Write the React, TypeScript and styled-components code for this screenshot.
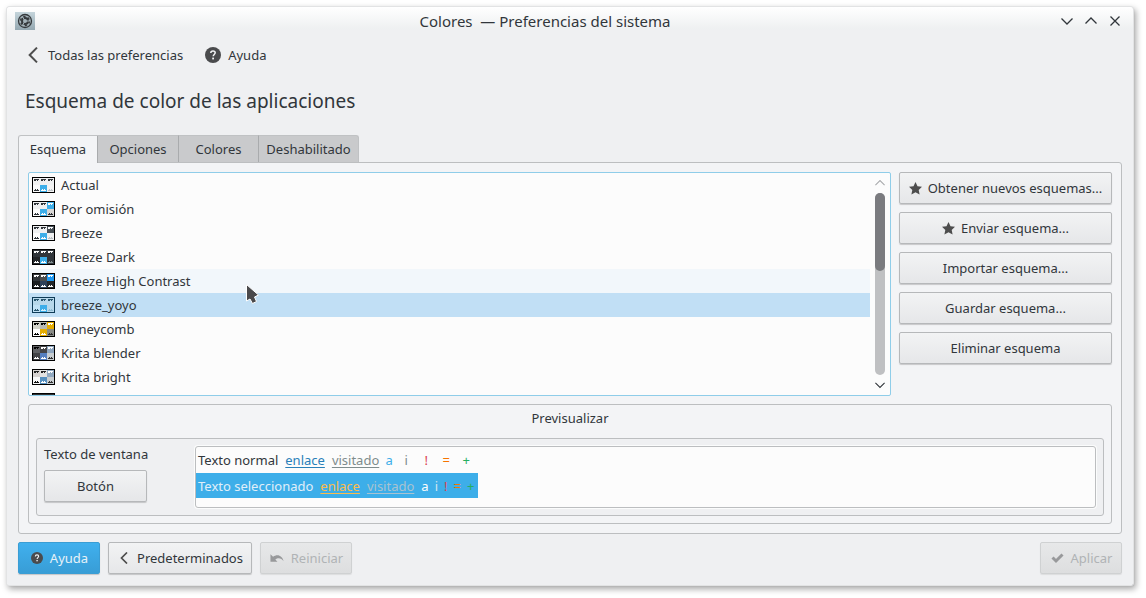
import React from "react";
import styled, { createGlobalStyle, css } from "styled-components";

const GlobalStyle = createGlobalStyle`
  * { box-sizing: border-box; }
  body {
    margin: 0;
    background: #ffffff;
    color: #31363b;
    font-family: "Noto Sans", "Open Sans", sans-serif;
    font-size: 13px;
    line-height: 18px;
  }
  button { font: inherit; color: inherit; margin: 0; padding: 0; border: 0; background: none; }
  svg { display: block; flex: none; }
`;

const Desktop = styled.div`
  padding: 7px 13px 13px 7px;
`;

const Window = styled.main`
  border-radius: 3px 3px 2px 2px;
  background: linear-gradient(#ffffff, #eef0f1 22px, #eff0f2 23px);
  box-shadow: 0 0 0 1px #e2e3e4, 1px 1px 1px #a0a2a4, 2px 3px 6px 1px rgba(0, 0, 0, 0.35);
`;

const TitleBar = styled.header`
  display: flex;
  align-items: center;
  height: 28px;
  margin-bottom: 1px;
  padding: 0 6px 0 8px;
`;

const Title = styled.h1`
  flex: 1;
  margin: 0;
  font-size: 15px;
  font-weight: 400;
  line-height: 20px;
  text-align: center;
  white-space: pre;
`;

const WindowButton = styled.button`
  display: grid;
  place-items: center;
  width: 24px;
  height: 24px;
`;

const ToolBar = styled.nav`
  display: flex;
  align-items: center;
  gap: 22px;
  height: 38px;
  padding: 0 18px;
`;

const ToolButton = styled.button`
  display: flex;
  align-items: center;
  gap: 7px;
`;

const Heading = styled.h2`
  margin: 0 0 7px;
  padding: 13px 18px;
  font-size: 19px;
  font-weight: 400;
  line-height: 28px;
`;

const Content = styled.div`
  padding: 0 11px 11px;
`;

const TabList = styled.div`
  display: flex;
`;

const Tab = styled.button<{ $active?: boolean; $width: number }>`
  width: ${(p) => p.$width}px;
  height: 27px;
  background: #c9cacc;
  border-top: 1px solid #c0c2c4;
  border-right: 1px solid #a9abad;
  &:last-child { border-radius: 0 3px 0 0; border-right-color: #c0c2c4; }
  ${(p) =>
    p.$active &&
    css`
      height: 28px;
      margin-bottom: -1px;
      padding-bottom: 1px;
      position: relative;
      background: #f3f4f6;
      border-left: 1px solid #bcbec0;
      border-radius: 3px 0 0 0;
    `}
`;

const frame = css`
  border: 1px solid #bcbec0;
  border-radius: 3px;
`;

const TabPanel = styled.section`
  ${frame}
  border-top-left-radius: 0;
  padding: 9px;
  background: #f3f4f6;
`;

const Columns = styled.div`
  display: flex;
  gap: 8px;
`;

const SchemeBox = styled.div`
  display: flex;
  flex: 1;
  height: 224px;
  overflow: hidden;
  border: 1px solid #8fcde9;
  border-radius: 2px;
  background: #fcfcfc;
`;

const SchemeList = styled.ul`
  flex: 1;
  margin: 0;
  padding: 0;
  list-style: none;
`;

const SchemeRow = styled.li<{ $state?: "hover" | "selected" }>`
  display: flex;
  align-items: center;
  gap: 6px;
  height: 24px;
  padding-left: 3px;
  background: ${(p) =>
    p.$state === "selected" ? "#c1dff5" : p.$state === "hover" ? "#f2f7fb" : "transparent"};
`;

const ScrollBar = styled.div`
  display: flex;
  flex-direction: column;
  align-items: center;
  width: 20px;
`;

const ScrollButton = styled.button`
  display: grid;
  place-items: center;
  width: 20px;
  height: 20px;
`;

const ScrollTrack = styled.div`
  flex: 1;
  width: 10px;
  border-radius: 5px;
  background: #bfc0c2;
`;

const ScrollThumb = styled.div`
  height: 78px;
  border-radius: 5px;
  background: #7a7b7f;
`;

const Actions = styled.div`
  display: flex;
  flex-direction: column;
  gap: 8px;
  width: 213px;
`;

const PushButton = styled.button<{ $primary?: boolean; $width?: number }>`
  display: flex;
  align-items: center;
  justify-content: center;
  gap: 6px;
  height: 32px;
  width: ${(p) => (p.$width ? `${p.$width}px` : "auto")};
  border: 1px solid #b6b8ba;
  border-radius: 2px;
  background: linear-gradient(#f2f3f4, #e6e7e9);
  box-shadow: 0 1px 1px rgba(0, 0, 0, 0.18);
  white-space: nowrap;
  &:disabled {
    color: #b0b3b5;
    border-color: #cfd1d2;
    background: linear-gradient(#e7e8e9, #dddedf);
    box-shadow: 0 1px 1px rgba(0, 0, 0, 0.08);
  }
  ${(p) =>
    p.$primary &&
    css`
      color: #e8f2f8;
      border-color: #3a9dd4;
      background: linear-gradient(#40b0ee, #389dd6);
    `}
`;

const Preview = styled.section`
  ${frame}
  margin-top: 8px;
  padding: 4px 7px 7px;
`;

const PreviewTitle = styled.h3`
  margin: 0 0 11px;
  font-size: 13px;
  font-weight: 400;
  line-height: 18px;
  text-align: center;
`;

const PreviewFrame = styled.div`
  ${frame}
  display: flex;
  gap: 48px;
  padding: 7px;
  background: #eff0f2;
`;

const Sample = styled.div`
  display: flex;
  flex-direction: column;
  gap: 8px;
  width: 103px;
  line-height: 16px;
  white-space: nowrap;
`;

const TextView = styled.div`
  ${frame}
  display: flex;
  flex-direction: column;
  gap: 1px;
  flex: 1;
  height: 62px;
  background: #fcfcfc;
  box-shadow: 0 0 0 1px #fbfcfc;
`;

const TextLine = styled.div<{ $selected?: boolean }>`
  display: flex;
  align-items: center;
  gap: 7px;
  width: max-content;
  height: 25px;
  padding: 0 4px 0 2px;
  color: ${(p) => (p.$selected ? "#e0eff9" : "#31363b")};
  background: ${(p) => (p.$selected ? "#3daee9" : "transparent")};
`;

const Link = styled.a<{ $color: string }>`
  color: ${(p) => p.$color};
  text-decoration: underline;
  text-underline-offset: 2px;
`;

const Marks = styled.span<{ $wide?: boolean }>`
  display: flex;
  gap: ${(p) => (p.$wide ? 0 : 6)}px;
  ${(p) =>
    p.$wide &&
    css`
      & > span { width: 20px; text-align: center; }
      & > span:first-child { width: 14px; margin-left: -4px; }
    `}
`;

const Mark = styled.span<{ $color: string }>`
  color: ${(p) => p.$color};
`;

const Footer = styled.footer`
  display: flex;
  gap: 8px;
  margin-top: 8px;
  & > button { gap: 7px; padding-left: 1px; }
`;

const Spacer = styled.span`
  flex: 1;
`;

const Pointer = styled.svg`
  position: absolute;
  left: 245px;
  top: 283px;
`;

type ChevronProps = { dir: "up" | "down" | "left"; size?: number; color?: string; weight?: number };

function Chevron({ dir, size = 12, color = "#31363b", weight = 1.3 }: ChevronProps) {
  const paths = { down: "M.5 3.5 6 9l5.500-5.500", up: "M.5 8.500 6 3l5.500 5.500", left: "M9 .5 3.500 6 9 11.500" };
  return (
    <svg width={size} height={size} viewBox="0 0 12 12" fill="none" stroke={color} strokeWidth={weight}>
      <path d={paths[dir]} />
    </svg>
  );
}

function HelpIcon({ size }: { size: number }) {
  return (
    <svg width={size} height={size} viewBox="0 0 16 16">
      <circle cx="8" cy="8" r="8" fill="#4a4b4d" />
      <path d="M5.800 5.900c0-1.400 1-2 2.200-2s2.200.7 2.200 1.900c0 1.600-2 1.700-2 3.400" fill="none" stroke="#f3f4f5" strokeWidth="1.500" />
      <rect x="7.200" y="10.600" width="1.800" height="1.800" fill="#f3f4f5" />
    </svg>
  );
}

function StarIcon() {
  return (
    <svg width="13" height="13" viewBox="0 0 13 13" fill="#4d4d4d">
      <path d="M6.500 0 8.500 4.200l4.500.6-3.300 3.100.9 4.700-4.100-2.300-4.100 2.300.9-4.700L0 4.800l4.500-.6z" />
    </svg>
  );
}

function AppIcon() {
  return (
    <svg width="20" height="18" viewBox="0 0 20 18">
      <defs>
        <linearGradient id="appTile" x1="0" y1="0" x2="0" y2="1">
          <stop offset="0" stopColor="#c5d5db" />
          <stop offset="1" stopColor="#94a8b1" />
        </linearGradient>
      </defs>
      <rect width="20" height="18" fill="url(#appTile)" />
      <circle cx="10" cy="9" r="6.500" fill="#a5b4ba" stroke="#35393c" strokeWidth="1.300" />
      <circle cx="10" cy="9" r="3" fill="none" stroke="#35393c" strokeWidth="2" />
      <circle cx="10" cy="9" r="4.500" fill="none" stroke="#35393c" strokeWidth="1.300" strokeDasharray="2.400 2.310" />
      <path d="M10 9h5M10 9 7.500 4.700M10 9l-2.500 4.300" stroke="#a5b4ba" strokeWidth="1" />
    </svg>
  );
}

type Cell = [background: string, ink: string];

function SchemeIcon({ cells, outline = "#000000" }: { cells: Cell[]; outline?: string }) {
  return (
    <svg width="23" height="16" viewBox="0 0 23 16" shapeRendering="crispEdges">
      <rect width="23" height="16" fill={outline} />
      {cells.map(([background, ink], i) => {
        const top = i < 3;
        return (
          <g key={i} transform={`translate(${1 + (i % 3) * 7} ${top ? 1 : 8})`}>
            <rect width="7" height="7" fill={background} />
            <path d={top ? "M1 1h5v1h-1v1h-1v-1h-1v1h-2z" : "M1 6v-1h1v-1h1v1h1v-1h1v1h1v1z"} fill={ink} />
          </g>
        );
      })}
    </svg>
  );
}

type Scheme = { name?: string; cells: Cell[]; outline?: string; state?: "hover" | "selected" };

const dark = "#31363b";
const light = "#fcfcfc";

const schemes: Scheme[] = [
  { name: "Actual", cells: [["#f3f3f3", dark], ["#eff0f1", dark], ["#eff0f1", dark], [light, dark], ["#3daee9", light], ["#f3f3f3", "#bdc3c7"]] },
  { name: "Por omisión", cells: [["#eff0f1", dark], ["#eff0f1", dark], ["#3daee9", light], [light, dark], ["#3daee9", light], ["#d8d6d4", dark]] },
  { name: "Breeze", cells: [["#eff0f1", dark], ["#eff0f1", dark], ["#475057", light], [light, dark], ["#3daee9", light], ["#eff0f1", "#bdc3c7"]] },
  { name: "Breeze Dark", cells: [[dark, light], [dark, light], [dark, light], ["#232629", light], ["#3daee9", light], [dark, "#7f8c8d"]] },
  { name: "Breeze High Contrast", state: "hover", cells: [["#303539", light], ["#4b4c4d", light], ["#1d99f3", light], ["#1b1e20", light], ["#2c405a", light], ["#232629", light]] },
  { name: "breeze_yoyo", state: "selected", outline: "#0f3c57", cells: [["#b7d8eb", "#28566f"], ["#b7d8eb", "#28566f"], ["#b7d8eb", "#28566f"], ["#c1e2f6", "#28566f"], ["#3daee9", "#d8eefa"], ["#b7d8eb", "#8ebbd2"]] },
  { name: "Honeycomb", cells: [["#d4d5cc", "#000"], ["#b8b9b2", "#000"], ["#e5ac00", "#fff"], ["#ffffff", "#000"], ["#e5ac00", "#fff"], ["#888a85", "#333"]] },
  { name: "Krita blender", cells: [["#606164", "#000"], ["#454548", "#fff"], ["#8fa6bf", "#fff"], ["#424245", "#fff"], ["#5680c1", "#fff"], ["#c7cdd1", "#333"]] },
  { name: "Krita bright", cells: [["#d6d2d0", "#222"], ["#e2e2e2", "#222"], ["#91a9c1", "#fff"], ["#f8f8f8", "#111"], ["#5690c0", "#fff"], ["#c7cdd1", "#333"]] },
  { cells: [["#303030", "#303030"], ["#303030", "#303030"], ["#303030", "#303030"], ["#222", "#ddd"], ["#444", "#ddd"], ["#333", "#ddd"]] },
];

const tabs = [
  { label: "Esquema", width: 80 },
  { label: "Opciones", width: 81 },
  { label: "Colores", width: 80 },
  { label: "Deshabilitado", width: 100 },
];

export default function App() {
  return (
    <>
      <GlobalStyle />
      <Desktop>
        <Window>
          <TitleBar>
            <AppIcon />
            <Title>{"Colores  — Preferencias del sistema"}</Title>
            <WindowButton aria-label="Minimizar"><Chevron dir="down" /></WindowButton>
            <WindowButton aria-label="Maximizar"><Chevron dir="up" /></WindowButton>
            <WindowButton aria-label="Cerrar">
              <svg width="10" height="10" viewBox="0 0 10 10" stroke="#31363b" strokeWidth="1.300">
                <path d="M.5.5l9 9M9.500.5l-9 9" />
              </svg>
            </WindowButton>
          </TitleBar>
          <ToolBar>
            <ToolButton><Chevron dir="left" size={16} color="#4d4d4d" weight={1.500} />Todas las preferencias</ToolButton>
            <ToolButton><HelpIcon size={16} />Ayuda</ToolButton>
          </ToolBar>
          <Heading>Esquema de color de las aplicaciones</Heading>
          <Content>
            <TabList role="tablist">
              {tabs.map((tab, i) => (
                <Tab key={tab.label} role="tab" aria-selected={i === 0} $active={i === 0} $width={tab.width}>
                  {tab.label}
                </Tab>
              ))}
            </TabList>
            <TabPanel role="tabpanel">
              <Columns>
                <SchemeBox>
                  <SchemeList role="listbox" aria-label="Esquema">
                    {schemes.map((s, i) => (
                      <SchemeRow key={i} role="option" aria-selected={s.state === "selected"} $state={s.state}>
                        <SchemeIcon cells={s.cells} outline={s.outline} />
                        {s.name}
                      </SchemeRow>
                    ))}
                  </SchemeList>
                  <ScrollBar>
                    <ScrollButton aria-label="Subir"><Chevron dir="up" size={10} color="#a9abad" /></ScrollButton>
                    <ScrollTrack><ScrollThumb /></ScrollTrack>
                    <ScrollButton aria-label="Bajar"><Chevron dir="down" size={10} /></ScrollButton>
                  </ScrollBar>
                </SchemeBox>
                <Actions>
                  <PushButton><StarIcon />Obtener nuevos esquemas...</PushButton>
                  <PushButton><StarIcon />Enviar esquema...</PushButton>
                  <PushButton>Importar esquema...</PushButton>
                  <PushButton>Guardar esquema...</PushButton>
                  <PushButton>Eliminar esquema</PushButton>
                </Actions>
              </Columns>
              <Preview>
                <PreviewTitle>Previsualizar</PreviewTitle>
                <PreviewFrame>
                  <Sample>
                    <span>Texto de ventana</span>
                    <PushButton>Botón</PushButton>
                  </Sample>
                  <TextView>
                    <TextLine>
                      <span>Texto normal</span>
                      <Link href="#enlace" $color="#2980b9">enlace</Link>
                      <Link href="#visitado" $color="#7f8c8d">visitado</Link>
                      <Marks $wide>
                        <Mark $color="#3daee9">a</Mark>
                        <Mark $color="#7f8c8d">i</Mark>
                        <Mark $color="#da4453">!</Mark>
                        <Mark $color="#f67400">=</Mark>
                        <Mark $color="#27ae60">+</Mark>
                      </Marks>
                    </TextLine>
                    <TextLine $selected>
                      <span>Texto seleccionado</span>
                      <Link href="#enlace" $color="#fdbc4b">enlace</Link>
                      <Link href="#visitado" $color="#a9c3d0">visitado</Link>
                      <Marks>
                        <Mark $color="#fcfcfc">a</Mark>
                        <Mark $color="#d5e6f0">i</Mark>
                        <Mark $color="#da4453">!</Mark>
                        <Mark $color="#f67400">=</Mark>
                        <Mark $color="#27ae60">+</Mark>
                      </Marks>
                    </TextLine>
                  </TextView>
                </PreviewFrame>
              </Preview>
            </TabPanel>
            <Footer>
              <PushButton $primary $width={82}><HelpIcon size={12} />Ayuda</PushButton>
              <PushButton $width={144}><Chevron dir="left" color="#4d4d4d" weight={1.700} />Predeterminados</PushButton>
              <PushButton disabled $width={92}>
                <svg width="14" height="12" viewBox="0 0 15 12" fill="#98999b">
                  <path d="M.5 2v8H8L5.700 7.700C8.500 5 12.500 6 14.500 9.500 13.500 3.500 8 1 3.300 4.600z" />
                </svg>
                Reiniciar
              </PushButton>
              <Spacer />
              <PushButton disabled $width={82}>
                <svg width="13" height="12" viewBox="0 0 13 12" fill="none" stroke="#98999b" strokeWidth="3">
                  <path d="M1.500 5.500 5 9l6.500-6.500" />
                </svg>
                Aplicar
              </PushButton>
            </Footer>
          </Content>
        </Window>
      </Desktop>
      <Pointer width="15" height="22" viewBox="0 0 15 22" aria-hidden="true">
        <path d="M1.500 1.500v16.500l3.500-2 2.500 4.500 4-2-2-4.500 4-2z" fill="#4a4a4c" stroke="#ffffff" strokeWidth="1" />
      </Pointer>
    </>
  );
}
